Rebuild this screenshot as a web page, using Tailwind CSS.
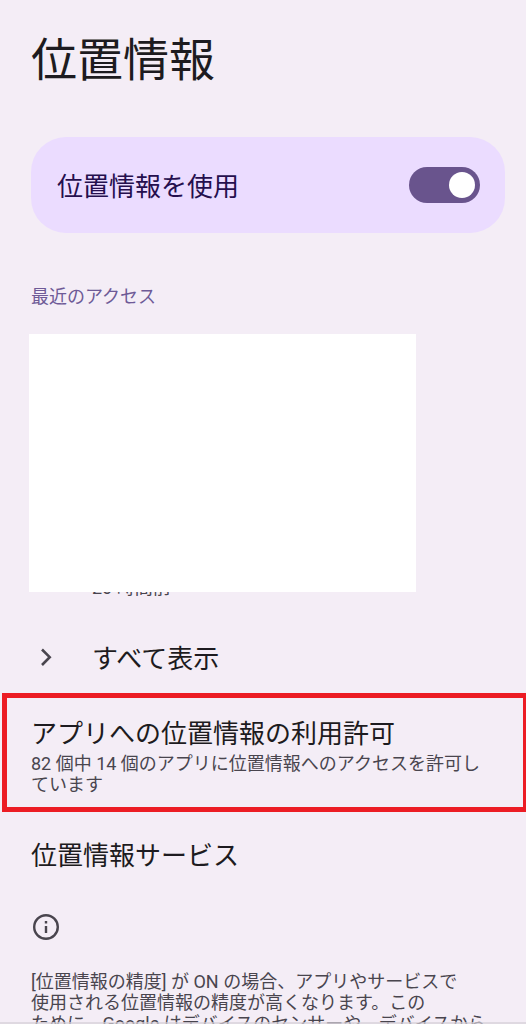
<!DOCTYPE html>
<html lang="ja">
<head>
  <meta charset="UTF-8">
  <meta name="viewport" content="width=device-width, initial-scale=1">
  <title>位置情報</title>
  <script src="https://cdn.jsdelivr.net/npm/@tailwindcss/browser@4"></script>
</head>
<body class="bg-[#f4edf6] h-screen overflow-hidden font-[Roboto,'Noto_Sans_CJK_JP',sans-serif] text-[#1d1b20]">

  <main>
    <h1 class="px-[31px] pt-7 text-[46px] leading-[64px]">位置情報</h1>

    <!-- main switch -->
    <label for="useLocation" class="mt-[45px] ml-[31px] mr-[21px] h-24 pl-[26px] pr-[25px] rounded-[35px] bg-[#ebdcff] flex items-center justify-between text-[26px] text-[#250f4e] cursor-pointer">
      <span class="pt-1 leading-[34px]">位置情報を使用</span>
      <input id="useLocation" type="checkbox" role="switch" checked class="appearance-none w-[71px] h-9 rounded-full bg-[#9a93a3] checked:bg-[#69548d] p-[5px] flex items-center checked:justify-end before:content-[''] before:size-[26px] before:rounded-full before:bg-white">
    </label>

    <!-- recent access -->
    <section>
      <h2 class="mt-[51px] px-[31px] text-lg leading-[26px] text-[#6e5a97]">最近のアクセス</h2>
      <div class="relative mt-6 h-[264px] flex items-end">
        <p class="pl-[92px] text-lg leading-[21px] text-[#49454e]">20 時間前</p>
        <div class="absolute top-0 left-[29px] right-[110px] h-[258px] bg-white"></div>
      </div>
      <a href="#" class="mt-10 pl-8 flex items-center gap-8 text-[26px]">
        <svg class="size-7" viewBox="0 0 28 28" fill="none" stroke="#49454e" stroke-width="2.6" aria-hidden="true">
          <path d="M10 6.5l7.7 7.7L10 22"/>
        </svg>
        <span class="pt-1 leading-[34px]">すべて表示</span>
      </a>
    </section>

    <!-- app permissions, highlighted -->
    <a href="#" class="mt-[17px] ml-[2px] h-[119px] block border-[5px] border-r-[3px] border-[#ec1c24] pl-6 pt-[17px]">
      <span class="block text-[26px] leading-[38px]">アプリへの位置情報の利用許可</span>
      <span class="block text-lg leading-[21px] text-[#49454e]">82 個中 14 個のアプリに位置情報へのアクセスを許可し<br>ています</span>
    </a>

    <a href="#" class="mt-[25px] px-[31px] block text-[26px] leading-[38px]">位置情報サービス</a>

    <!-- footer note -->
    <footer class="px-[31px] pt-[38px] text-[#49454e]">
      <svg class="size-[30px]" viewBox="0 0 30 30" fill="none" stroke="#49454e" stroke-width="2.4" aria-hidden="true">
        <circle cx="15" cy="14" r="11.8"/>
        <path d="M15 13v7M15 8v2.6"/>
      </svg>
      <p class="mt-[28px] text-lg leading-[21px] whitespace-nowrap">[位置情報の精度] が ON の場合、アプリやサービスで<br>使用される位置情報の精度が高くなります。この<br>ために、Google はデバイスのセンサーや、デバイスから</p>
    </footer>
  </main>

  <div class="fixed bottom-0 inset-x-0 h-[2px] bg-[#d6d0d9]/70"></div>

</body>
</html>
